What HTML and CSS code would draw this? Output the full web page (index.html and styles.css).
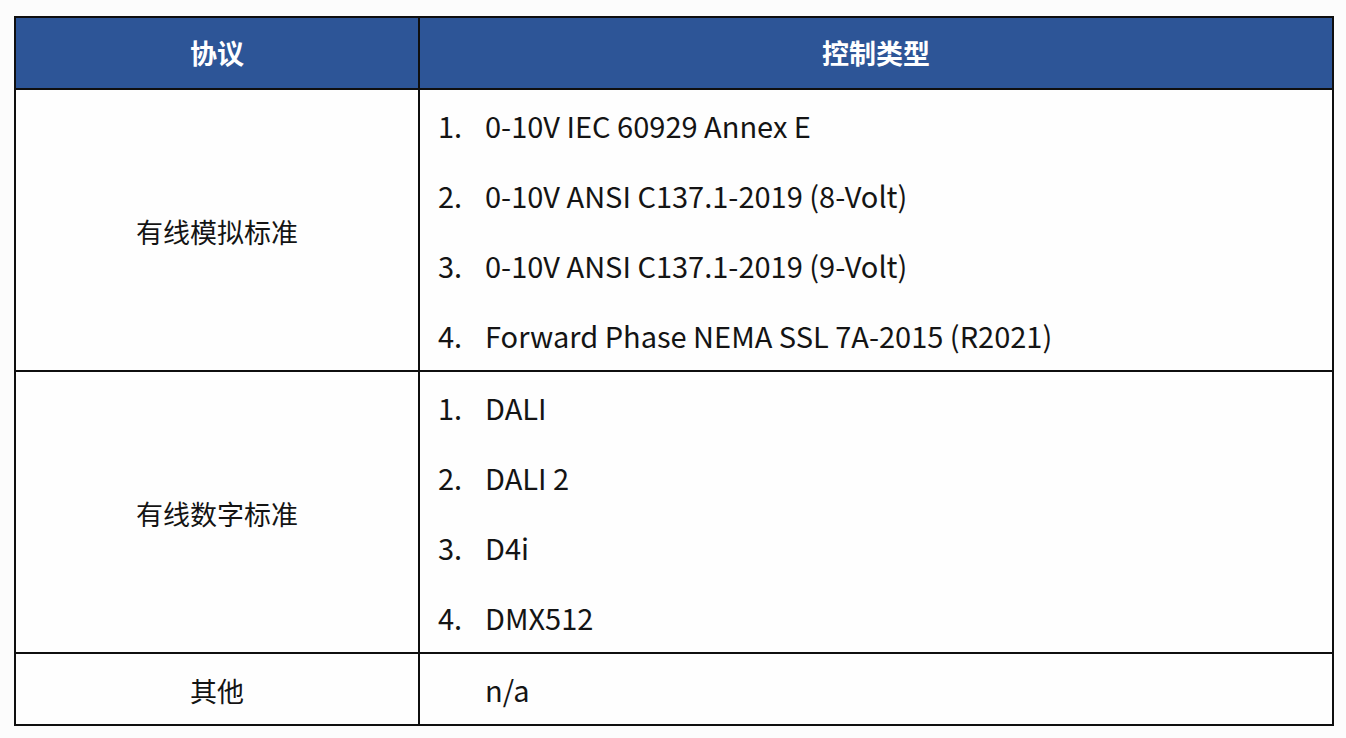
FILE: index.html
```html
<!DOCTYPE html>
<html lang="zh">
<head>
<meta charset="utf-8">
<title>协议 控制类型</title>
<link rel="stylesheet" href="styles.css">
</head>
<body>
<div class="table">
  <div class="cell head">协议</div>
  <div class="cell head">控制类型</div>

  <div class="cell name">有线模拟标准</div>
  <div class="cell list">
    <div class="item"><span class="num">1.</span><span class="txt">0-10V IEC 60929 Annex E</span></div>
    <div class="item"><span class="num">2.</span><span class="txt">0-10V ANSI C137.1-2019 (8-Volt)</span></div>
    <div class="item"><span class="num">3.</span><span class="txt">0-10V ANSI C137.1-2019 (9-Volt)</span></div>
    <div class="item"><span class="num">4.</span><span class="txt">Forward Phase NEMA SSL 7A-2015 (R2021)</span></div>
  </div>

  <div class="cell name">有线数字标准</div>
  <div class="cell list">
    <div class="item"><span class="num">1.</span><span class="txt">DALI</span></div>
    <div class="item"><span class="num">2.</span><span class="txt">DALI 2</span></div>
    <div class="item"><span class="num">3.</span><span class="txt">D4i</span></div>
    <div class="item"><span class="num">4.</span><span class="txt">DMX512</span></div>
  </div>

  <div class="cell name">其他</div>
  <div class="cell list">
    <div class="item"><span class="num"></span><span class="txt">n/a</span></div>
  </div>
</div>
</body>
</html>
```

FILE: styles.css
```css
html, body {
  margin: 0;
  padding: 0;
  background: #fcfcfc;
}

body {
  font-family: "Noto Sans CJK SC", "Noto Sans", sans-serif;
  color: #141414;
}

.table {
  margin: 16px 0 0 14px;
  width: 1316px;
  padding: 2px;
  background: #0f0f0f;
  display: grid;
  grid-template-columns: 402px 912px;
  grid-template-rows: 70px 280px 280px 70px;
  gap: 2px;
}

.cell {
  background: #fefefe;
}

.head {
  background: #2d5597;
  color: #ffffff;
  font-weight: 700;
  font-size: 27px;
  display: flex;
  align-items: center;
  justify-content: center;
  padding-bottom: 2px;
}

.name {
  font-size: 27px;
  display: flex;
  align-items: center;
  justify-content: center;
  padding-top: 2px;
}

.list {
  display: flex;
  flex-direction: column;
}

.item {
  height: 70px;
  display: flex;
  align-items: center;
  padding-left: 18px;
  font-size: 29px;
}

.num {
  width: 47px;
  flex: none;
}
```
